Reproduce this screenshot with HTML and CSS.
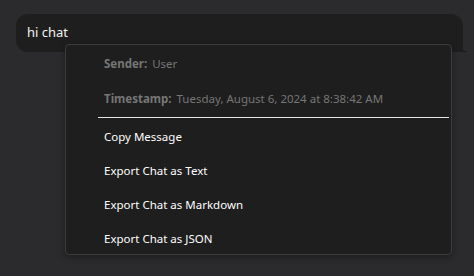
FILE: index.html
```html
<!DOCTYPE html>
<html>
<head>
    <title>Chat</title>
    <link rel="stylesheet" href="styles.css">
</head>
<body>
    <div class="chat">
        <div class="bubble">
            <span class="bubble-text">hi chat</span>
        </div>
        <div class="context-menu">
            <div class="info-row"><span class="info-label">Sender:</span> <span class="info-value">User</span></div>
            <div class="info-row"><span class="info-label">Timestamp:</span> <span class="info-value">Tuesday, August 6, 2024 at 8:38:42 AM</span></div>
            <div class="divider"></div>
            <div class="menu-item">Copy Message</div>
            <div class="menu-item">Export Chat as Text</div>
            <div class="menu-item">Export Chat as Markdown</div>
            <div class="menu-item">Export Chat as JSON</div>
        </div>
    </div>
</body>
</html>
```

FILE: styles.css
```css
body {
    margin: 0;
    background-color: #2b2b2d;
    font-family: "Noto Sans", "Open Sans", sans-serif;
    width: 474px;
    height: 276px;
    overflow: hidden;
}
.chat {
    position: relative;
    padding: 14px 11px 0 16px;
}
.bubble {
    position: relative;
    height: 38px;
    background-color: #1e1e1e;
    border-radius: 12px 12px 0 12px;
    padding: 0 11px;
    display: flex;
    align-items: center;
}
.bubble::after {
    content: "";
    position: absolute;
    right: -4px;
    bottom: 0;
    width: 6px;
    height: 6px;
    background: radial-gradient(circle at 100% 0, transparent 5px, #1e1e1e 5.5px);
}
.bubble-text {
    color: #f2f2f2;
    font-size: 13px;
    margin-top: -2px;
}
.context-menu {
    position: absolute;
    left: 65px;
    top: 44px;
    width: 387px;
    height: 211px;
    background-color: #1e1e1e;
    border: 1px solid #3c3c3e;
    border-radius: 4px;
    box-shadow: 0 2px 6px rgba(0, 0, 0, 0.35);
    box-sizing: border-box;
    padding-top: 1px;
}
.info-row {
    height: 35px;
    display: flex;
    align-items: center;
    padding-left: 38px;
    font-size: 11.5px;
    color: #767676;
}
.info-label {
    font-weight: bold;
    margin-right: 5px;
}
.divider {
    height: 1px;
    background-color: #e4e4e4;
    margin: 1px 2px 1px 32px;
}
.menu-item {
    height: 34px;
    display: flex;
    align-items: center;
    padding-left: 38px;
    font-size: 11.5px;
    color: #ffffff;
}
```
